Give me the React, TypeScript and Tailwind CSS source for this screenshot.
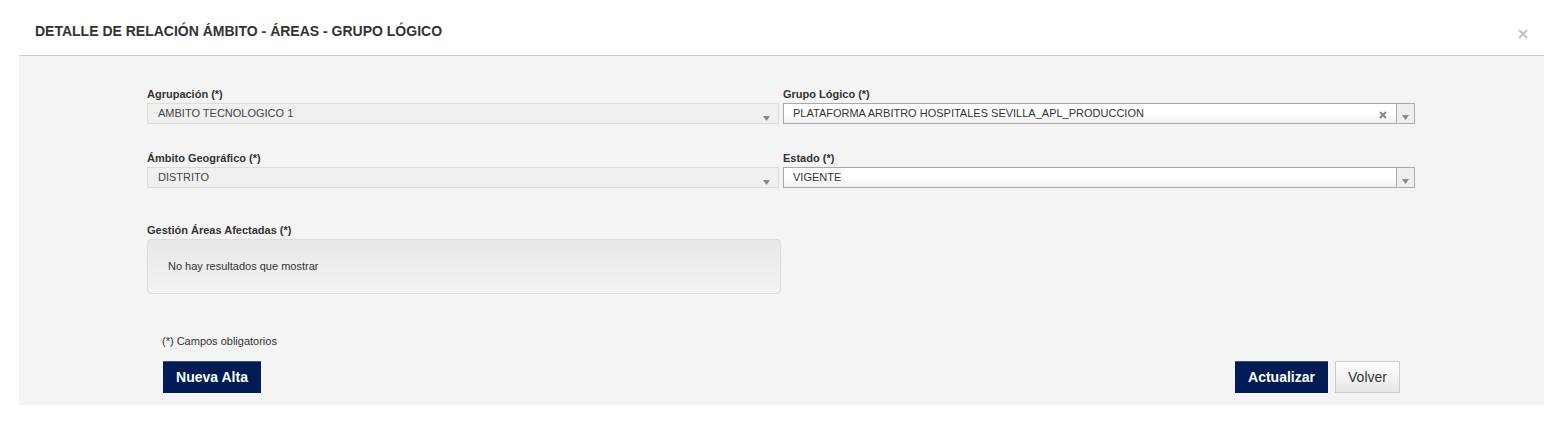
import React from 'react';

const Arrow: React.FC<{ className?: string }> = ({ className }) => (
  <svg width="7" height="5" viewBox="0 0 7 5" className={className}>
    <path d="M0 0h7L3.5 5z" fill="#888" />
  </svg>
);

const Label: React.FC<{ children: React.ReactNode }> = ({ children }) => (
  <label className="block text-[11px] leading-[14px] font-bold text-[#333] mb-[2px]">{children}</label>
);

// combo deshabilitado (columna izquierda)
const DisabledSelect: React.FC<{ value: string }> = ({ value }) => (
  <div className="relative h-[21px] border border-[#dddddd] bg-[#f0f0f0] flex items-center pl-[10px] text-[11px] text-[#444]">
    {value}
    <Arrow className="absolute right-[8px] top-[12px]" />
  </div>
);

const ActiveSelect: React.FC<{ value: string; clearable?: boolean }> = ({ value, clearable }) => (
  <div className="h-[21px] border border-[#aaaaaa] bg-gradient-to-b from-white from-50% to-[#eeeeee] flex items-center text-[11px] text-[#333]">
    <span className="flex-1 pl-[9px]">{value}</span>
    {clearable && (
      <svg width="8" height="8" viewBox="0 0 8 8" className="mr-[9px] mt-[2px]">
        <path d="M1 1L7 7M7 1L1 7" stroke="#888" strokeWidth="2" />
      </svg>
    )}
    <div className="w-[18px] h-full border-l border-[#aaaaaa] bg-[#eeeeee] flex items-end justify-center pb-[3px]">
      <Arrow />
    </div>
  </div>
);

export default function App() {
  return (
    <div className="w-[1560px] h-[430px] bg-white" style={{ fontFamily: '"Liberation Sans", Arial, sans-serif' }}>
      <div className="ml-[19px] w-[1525px]">
        <div className="relative h-[56px] border-b border-[#cccccc] pl-[16px]">
          <h2 className="pt-[23px] text-[14px] leading-[16px] font-bold text-[#333]">
            DETALLE DE RELACIÓN ÁMBITO - ÁREAS - GRUPO LÓGICO
          </h2>
          <button className="absolute right-[16px] top-[29px]">
            <svg width="10" height="10" viewBox="0 0 10 10">
              <path d="M1 1L9 9M9 1L1 9" stroke="#c4c4c4" strokeWidth="2" />
            </svg>
          </button>
        </div>

        <div className="bg-[#f4f4f4] pt-[31px] pb-[12px] pl-[128px] pr-[129px]">
          <div className="grid grid-cols-2 gap-x-[4px] gap-y-[27px]">
            <div>
              <Label>Agrupación (*)</Label>
              <DisabledSelect value="AMBITO TECNOLOGICO 1" />
            </div>
            <div>
              <Label>Grupo Lógico (*)</Label>
              <ActiveSelect value="PLATAFORMA ARBITRO HOSPITALES SEVILLA_APL_PRODUCCION" clearable />
            </div>
            <div>
              <Label>Ámbito Geográfico (*)</Label>
              <DisabledSelect value="DISTRITO" />
            </div>
            <div>
              <Label>Estado (*)</Label>
              <ActiveSelect value="VIGENTE" />
            </div>
          </div>

          <div className="mt-[35px] w-[634px]">
            <Label>Gestión Áreas Afectadas (*)</Label>
            <div className="h-[55px] rounded-[4px] border border-[#dddddd] bg-gradient-to-b from-[#e7e7e7] to-[#f3f3f3] flex items-center pl-[20px] text-[11px] text-[#333]">
              No hay resultados que mostrar
            </div>
          </div>

          <div className="px-[15px]">
            <p className="mt-[40px] text-[11px] leading-[14px] text-[#333]">(*) Campos obligatorios</p>
            <div className="mt-[13px] flex items-center">
              <button className="ml-[1px] h-[32px] w-[98px] bg-[#011c55] border-t border-[#3a5491] text-white font-bold text-[14px]">
                Nueva Alta
              </button>
              <div className="flex-1" />
              <button className="h-[32px] w-[93px] bg-[#011c55] border-t border-[#3a5491] text-white font-bold text-[14px]">
                Actualizar
              </button>
              <button className="ml-[7px] h-[32px] w-[65px] border border-[#cccccc] bg-gradient-to-b from-white to-[#e6e6e6] text-[#333] text-[14px]">
                Volver
              </button>
            </div>
          </div>
        </div>
      </div>
    </div>
  );
}
